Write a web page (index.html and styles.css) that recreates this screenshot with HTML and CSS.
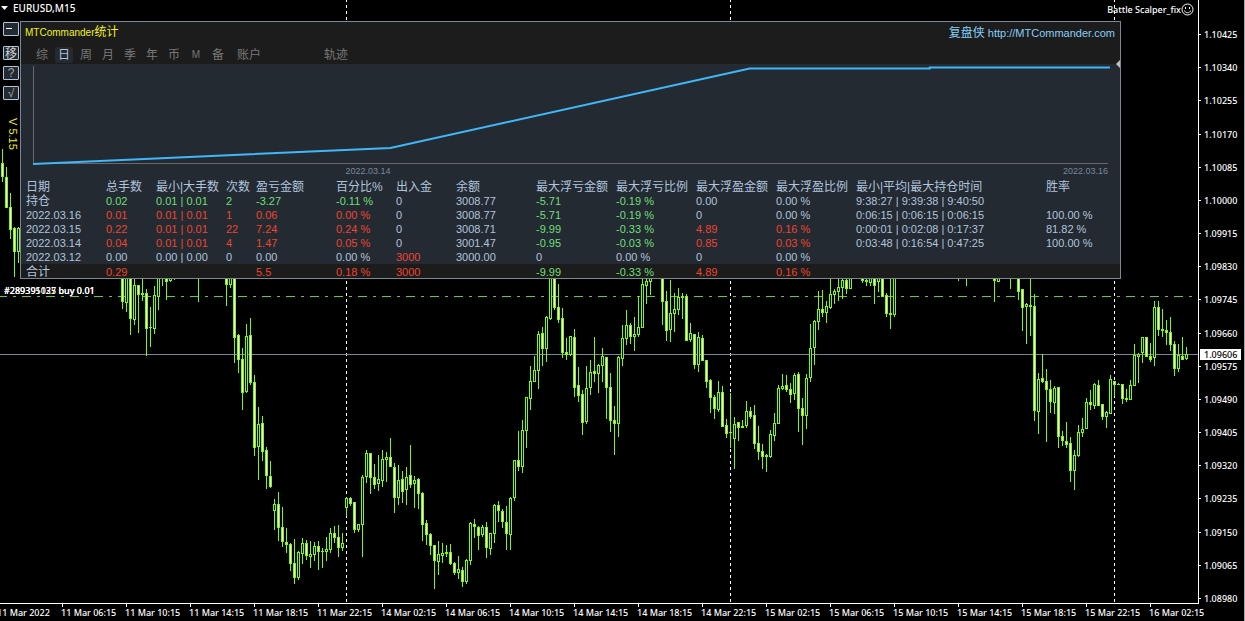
FILE: index.html
```html
<!DOCTYPE html>
<html lang="zh-CN">
<head>
<meta charset="utf-8">
<title>EURUSD,M15</title>
<link rel="stylesheet" href="styles.css">
</head>
<body>
<main class="terminal">
  <section class="chart">
    <svg class="plot" id="plot" viewBox="0 0 1198 603" preserveAspectRatio="none" shape-rendering="crispEdges" aria-label="EURUSD M15 candles">
      <path class="day-line" d="M346.5 -1V603M730.5 -1V603M1114.5 -1V603"/>
      <path class="order-line" d="M-2 296.5H1192"/>
      <path class="bid-line" d="M0 354.5H1198"/>
    </svg>

    <div class="symbol"><svg class="arrow" viewBox="0 0 7 4"><path d="M0 0H7L3.5 4Z"/></svg><span>EURUSD,M15</span></div>
    <div class="expert"><span>Battle Scalper_fix</span><svg class="smiley" viewBox="0 0 13 13"><circle cx="6.5" cy="6.5" r="5.5"/><path d="M3.5 7.5C4 10.5 9 10.5 9.5 7.5M4.5 4V6M8.5 4V6"/></svg></div>

    <div class="side">
      <button class="side-btn first" aria-label="收起"><svg viewBox="0 0 13 12"><path d="M2 5.5H8"/></svg></button>
      <button class="side-btn">移</button>
      <button class="side-btn latin">?</button>
      <button class="side-btn latin">√</button>
      <span class="version">V 5.15</span>
    </div>

    <section class="panel">
      <header class="panel-head">
        <div class="title-row">
          <h1 class="title">MTCommander<span class="han">统计</span></h1>
          <a class="site" href="#"><span class="han">复盘侠</span> http://MTCommander.com</a>
        </div>
        <nav class="tabs">
          <button class="tab">综</button><button class="tab active">日</button><button class="tab">周</button><button class="tab">月</button><button class="tab">季</button><button class="tab">年</button><button class="tab">币</button><button class="tab latin">M</button><button class="tab">备</button><button class="tab wide">账户</button><button class="tab wide track">轨迹</button>
        </nav>
        <svg class="fold" viewBox="0 0 4 8"><path d="M4 0V8L0 4Z"/></svg>
      </header>
      <svg class="equity" viewBox="0 0 1098 102" preserveAspectRatio="none" aria-label="资金曲线">
        <path class="axes" d="M12.5 2V99.5H1086" shape-rendering="crispEdges"/>
        <path class="curve" d="M12 100L369 84L728 4.5H908V3.5H1088"/>
      </svg>
      <div class="dates"><span>2022.03.14</span><span>2022.03.16</span></div>
      <table class="stats">
        <colgroup><col class="w85"><col class="w50"><col class="w70"><col class="w30"><col class="w80"><col class="w60"><col class="w60"><col class="w80"><col class="w80"><col class="w80"><col class="w80"><col class="w80"><col class="w190"><col></colgroup>
        <thead><tr><th>日期</th><th>总手数</th><th>最小|大手数</th><th>次数</th><th>盈亏金额</th><th>百分比%</th><th>出入金</th><th>余额</th><th>最大浮亏金额</th><th>最大浮亏比例</th><th>最大浮盈金额</th><th>最大浮盈比例</th><th>最小|平均|最大持仓时间</th><th>胜率</th></tr></thead>
        <tbody>
          <tr><td class="han">持仓</td><td class="g">0.02</td><td class="g">0.01 | 0.01</td><td class="g">2</td><td class="g">-3.27</td><td class="g">-0.11 %</td><td>0</td><td>3008.77</td><td class="g">-5.71</td><td class="g">-0.19 %</td><td>0.00</td><td>0.00 %</td><td>9:38:27 | 9:39:38 | 9:40:50</td><td></td></tr>
          <tr><td>2022.03.16</td><td class="r">0.01</td><td class="r">0.01 | 0.01</td><td class="r">1</td><td class="r">0.06</td><td class="r">0.00 %</td><td>0</td><td>3008.77</td><td class="g">-5.71</td><td class="g">-0.19 %</td><td>0</td><td>0.00 %</td><td>0:06:15 | 0:06:15 | 0:06:15</td><td>100.00 %</td></tr>
          <tr><td>2022.03.15</td><td class="r">0.22</td><td class="r">0.01 | 0.01</td><td class="r">22</td><td class="r">7.24</td><td class="r">0.24 %</td><td>0</td><td>3008.71</td><td class="g">-9.99</td><td class="g">-0.33 %</td><td class="r">4.89</td><td class="r">0.16 %</td><td>0:00:01 | 0:02:08 | 0:17:37</td><td>81.82 %</td></tr>
          <tr><td>2022.03.14</td><td class="r">0.04</td><td class="r">0.01 | 0.01</td><td class="r">4</td><td class="r">1.47</td><td class="r">0.05 %</td><td>0</td><td>3001.47</td><td class="g">-0.95</td><td class="g">-0.03 %</td><td class="r">0.85</td><td class="r">0.03 %</td><td>0:03:48 | 0:16:54 | 0:47:25</td><td>100.00 %</td></tr>
          <tr><td>2022.03.12</td><td>0.00</td><td>0.00 | 0.00</td><td>0</td><td>0.00</td><td>0.00 %</td><td class="r">3000</td><td>3000.00</td><td>0</td><td>0.00 %</td><td>0</td><td>0.00 %</td><td></td><td></td></tr>
        </tbody>
        <tfoot><tr><td class="han">合计</td><td class="r">0.29</td><td></td><td></td><td class="r">5.5</td><td class="r">0.18 %</td><td class="r">3000</td><td></td><td class="g">-9.99</td><td class="g">-0.33 %</td><td class="r">4.89</td><td class="r">0.16 %</td><td></td><td></td></tr></tfoot>
      </table>
    </section>

    <div class="orders"><span>#289395025 buy 0.01</span><span>#289391137 buy 0.01</span></div>
  </section>

  <aside class="prices">
    <span>1.10425</span><span>1.10340</span><span>1.10255</span><span>1.10170</span><span>1.10085</span><span>1.10000</span><span>1.09915</span><span>1.09830</span><span>1.09745</span><span>1.09660</span><span>1.09575</span><span>1.09490</span><span>1.09405</span><span>1.09320</span><span>1.09235</span><span>1.09150</span><span>1.09065</span><span>1.08980</span>
    <strong class="bid">1.09606</strong>
  </aside>

  <footer class="times">
    <span>11 Mar 2022</span><span>11 Mar 06:15</span><span>11 Mar 10:15</span><span>11 Mar 14:15</span><span>11 Mar 18:15</span><span>11 Mar 22:15</span><span>14 Mar 02:15</span><span>14 Mar 06:15</span><span>14 Mar 10:15</span><span>14 Mar 14:15</span><span>14 Mar 18:15</span><span>14 Mar 22:15</span><span>15 Mar 02:15</span><span>15 Mar 06:15</span><span>15 Mar 10:15</span><span>15 Mar 14:15</span><span>15 Mar 18:15</span><span>15 Mar 22:15</span><span>16 Mar 02:15</span>
  </footer>
</main>
<script src="candles.js"></script>
</body>
</html>
```

FILE: styles.css
```css
* { box-sizing: border-box; }

body {
  margin: 0;
  background: #000;
  color: #fff;
  font-family: "Noto Sans", "Noto Sans CJK SC", sans-serif;
  font-size: 9px;
  font-weight: 500;
  line-height: 12px;
}

button {
  margin: 0;
  padding: 0;
  border: 0;
  background: none;
  color: inherit;
  font: inherit;
}

.terminal {
  display: grid;
  grid-template-columns: minmax(0, 1fr) 47px;
  grid-template-rows: minmax(0, 1fr) 18px;
  height: 100vh;
  overflow: hidden;
}

.chart { position: relative; min-height: 0; }

.plot { display: block; width: 100%; height: 100%; }
.day-line { stroke: #fff; stroke-dasharray: 3 3; fill: none; }
.order-line { stroke: #5fcc32; stroke-dasharray: 9 6 3 6; }
.bid-line { stroke: #778899; }
.candle { fill: #7cfc00; }
.bear { fill: #fff; }
.bull { fill: #000; }

.symbol {
  position: absolute;
  top: 2px;
  left: 1px;
  display: flex;
  align-items: center;
  gap: 5px;
  font-size: 10px;
}
.arrow { width: 7px; height: 4px; fill: #fff; }

.expert {
  position: absolute;
  top: 3px;
  right: 4px;
  display: flex;
  align-items: center;
}
.smiley { width: 13px; height: 13px; fill: none; stroke: #fff; }

/* Tool buttons at the left edge */
.side {
  position: absolute;
  top: 22px;
  left: 3px;
  display: flex;
  flex-direction: column;
  gap: 6px;
}
.side-btn {
  width: 16px;
  height: 14px;
  border: 1px solid #b0c4de;
  border-radius: 1px;
  background: #242a31;
  color: #d0d4d8;
  font-family: "Noto Sans CJK SC", sans-serif;
  font-size: 12px;
  font-weight: normal;
  line-height: 12px;
  text-align: center;
}
.side-btn svg { display: block; width: 13px; height: 12px; stroke: #fff; }
.side-btn.first { margin-bottom: 4px; }
.side-btn.latin { color: #a0a4a8; font-family: "Liberation Sans", sans-serif; }
.version {
  align-self: flex-end;
  margin-top: 12px;
  color: #f0f020;
  font-family: "Liberation Sans", sans-serif;
  font-size: 11px;
  writing-mode: vertical-rl;
}

/* Statistics panel */
.panel {
  position: absolute;
  top: 21px;
  left: 20px;
  right: 77px;
  border: 1px solid #778899;
  background: #242a31;
  color: #b0c4de;
  font-family: "Liberation Sans", "Noto Sans CJK SC", sans-serif;
  font-size: 11px;
  font-weight: normal;
}
.panel .han { font-size: 12px; }
.panel-head { position: relative; background: #1c1c1c; }
.title-row {
  display: flex;
  align-items: center;
  justify-content: space-between;
  height: 21px;
  padding: 0 5px 0 4px;
}
.title { margin: 0; color: #f0f020; font-size: 10px; font-weight: normal; }
.site { color: #87cefa; text-decoration: none; }
.tabs { display: flex; align-items: center; gap: 4px; height: 21px; padding: 3px 0 0 12px; }
.tab {
  width: 18px;
  height: 16px;
  border-radius: 2px;
  color: #787878;
  font-size: 12px;
  line-height: 16px;
}
.tab.latin { font-size: 10px; }
.tab.active { background: #242a31; color: #b0c4de; }
.tab.wide { width: 36px; }
.tab.track { margin-left: 47px; }
.fold { position: absolute; right: 0; bottom: -4px; width: 4px; height: 8px; fill: #c0c0c0; }

.equity { display: block; width: 100%; height: 102px; }
.axes { fill: none; stroke: #696969; }
.curve { fill: none; stroke: #3fb8fb; stroke-width: 2; }

.dates {
  display: grid;
  grid-template-columns: 34% 1fr;
  height: 15px;
  padding-right: 12px;
  color: #778899;
  font-size: 9px;
  line-height: 10px;
  text-align: right;
}

.stats { width: 100%; border-collapse: collapse; table-layout: fixed; }
.stats th, .stats td {
  height: 14px;
  padding: 0;
  font-weight: normal;
  line-height: 14px;
  text-align: left;
  white-space: nowrap;
}
.stats th { height: 13px; font-size: 12px; line-height: 13px; }
.stats th:first-child, .stats td:first-child { padding-left: 5px; }
.stats tfoot { background: #1c1c1c; }
.stats tfoot td { padding-top: 2px; line-height: 12px; }
.stats .g { color: #6fdf78; }
.stats .r { color: #ec4530; }
.w30 { width: 30px; }
.w50 { width: 50px; }
.w60 { width: 60px; }
.w70 { width: 70px; }
.w80 { width: 80px; }
.w85 { width: 85px; }
.w190 { width: 190px; }

.orders { position: absolute; top: 285px; left: 4px; display: grid; }
.orders span { grid-area: 1 / 1; }

/* Price scale */
.prices {
  position: relative;
  grid-row: 1 / 3;
  grid-column: 2;
  display: flex;
  flex-direction: column;
  justify-content: space-between;
  padding: 29px 0 16px 6px;
  border-right: 1px solid #a8a8a8;
}
.prices::after {
  content: "";
  position: absolute;
  top: 0;
  bottom: 17px;
  left: 0;
  border-left: 1px solid #fff;
}
.prices span { position: relative; }
.prices span::before {
  content: "";
  position: absolute;
  top: 5px;
  left: -5px;
  width: 2px;
  border-top: 1px solid #fff;
}
.bid {
  position: absolute;
  top: 349px;
  left: 2px;
  right: 3px;
  padding-left: 4px;
  background: #fff;
  color: #000;
  font-weight: 500;
  line-height: 11px;
}

/* Time scale */
.times {
  display: grid;
  grid-template-columns: repeat(18, minmax(0, 64fr)) minmax(0, 48fr);
  margin-left: -2px;
  border-top: 1px solid #fff;
  text-indent: -1px;
  white-space: nowrap;
}
.times span { position: relative; padding-top: 3px; }
.times span::before {
  content: "";
  position: absolute;
  top: 0;
  left: 0;
  height: 3px;
  border-left: 1px solid #fff;
}
```

FILE: candles.js
```javascript
// x, high, body top, body bottom, low, 1 = falling
const candles = `
2 149 163 177 182 1;6 167 177 208 208 1;10 193 207 230 239 1;14 227 228 252 277 1;18 227 228 252 263 0;
122 270 270 302 309 1;126 270 270 303 312 0;130 270 270 319 335 1;134 270 285 320 325 0;138 285 285 295 333 1;
142 270 293 295 301 1;146 289 293 329 356 1;150 307 327 328 347 0;154 286 295 329 334 0;158 270 270 297 310 0;
162 270 270 270 286 0;166 270 270 282 300 1;170 270 270 281 282 0;174 270 270 270 280 0;198 270 270 270 302 0;
226 270 270 285 306 1;230 270 270 285 288 0;234 270 270 338 363 1;238 334 335 360 373 1;242 348 359 393 410 1;
246 324 336 392 393 0;250 318 335 383 385 1;254 375 382 448 456 1;258 407 424 447 480 0;262 416 423 452 461 1;
266 447 450 476 489 1;270 461 476 487 488 1;274 499 504 511 530 0;278 492 504 528 541 1;282 507 527 542 547 1;
286 528 542 545 553 1;290 543 544 564 571 1;294 539 563 578 584 1;298 551 552 578 580 0;302 538 543 554 564 0;
306 540 543 556 560 1;310 541 554 557 568 0;314 542 546 555 561 0;318 541 546 552 570 1;322 548 551 552 568 0;
326 537 549 552 561 0;330 528 533 550 553 0;334 526 533 538 543 1;338 525 537 548 557 1;342 533 543 548 551 0;
346 497 498 508 516 0;350 497 498 504 506 1;354 502 502 530 533 1;358 524 524 530 532 0;362 475 477 525 557 0;
366 450 453 477 483 0;370 453 453 478 494 1;374 464 477 485 489 1;378 455 479 484 491 0;382 450 459 481 487 0;
386 452 457 460 482 0;390 438 457 467 467 1;394 463 467 498 513 1;398 465 480 498 505 0;402 471 479 492 503 1;
406 467 477 490 505 0;410 445 475 485 488 1;414 476 480 484 508 0;418 478 479 494 509 1;422 492 493 525 541 1;
426 520 523 535 545 1;430 533 534 546 555 1;434 545 545 561 589 1;438 541 554 562 575 0;442 543 553 556 563 0;
446 545 552 554 557 0;450 544 552 564 565 1;454 562 563 573 575 1;458 556 569 573 579 0;462 567 570 582 587 1;
466 559 560 582 584 0;470 522 523 561 565 0;474 519 524 527 538 1;478 526 527 536 550 1;482 525 527 535 537 0;
486 522 527 548 558 1;490 533 533 549 555 0;494 504 505 534 543 0;498 501 505 511 522 1;502 509 511 522 528 1;
506 506 522 534 550 1;510 497 498 535 550 0;514 460 460 498 501 0;518 431 460 467 471 1;522 420 430 467 473 0;
526 397 397 431 448 0;530 366 381 399 410 0;534 356 370 382 382 0;538 331 334 371 389 0;542 327 333 349 366 1;
546 316 317 349 362 0;550 270 270 319 320 0;554 270 270 308 310 1;558 284 307 320 323 1;562 308 318 353 358 1;
566 338 352 355 360 1;570 336 336 355 356 0;574 329 337 388 397 1;578 367 385 396 402 1;582 390 394 423 435 1;
586 366 388 422 424 0;590 360 372 388 395 0;594 337 371 374 382 1;598 364 365 374 393 0;602 348 356 366 382 0;
606 357 357 388 419 1;610 373 387 421 432 1;614 406 420 424 455 1;618 356 357 424 437 0;622 325 338 359 366 0;
626 310 325 339 345 0;630 323 325 337 344 1;634 317 334 337 351 0;638 296 327 335 337 0;642 270 284 328 328 0;
646 270 281 286 304 0;650 270 270 282 295 0;662 270 270 302 325 1;666 291 301 331 341 1;670 280 313 330 342 0;
674 293 309 314 332 0;678 288 297 310 315 0;682 293 296 298 319 0;686 294 296 341 341 1;690 323 333 340 342 0;
694 334 334 365 369 1;698 332 337 365 372 0;702 335 338 361 361 1;706 360 360 382 388 1;710 379 380 398 413 1;
714 395 397 409 419 1;718 381 392 410 412 0;722 386 392 427 427 1;726 419 425 434 438 1;730 393 432 433 448 0;
734 417 424 439 469 0;738 422 422 428 441 1;742 420 426 428 428 1;746 401 411 426 428 0;750 407 411 417 419 1;
754 405 415 444 449 1;758 426 443 452 460 1;762 444 451 457 469 1;766 454 455 457 472 0;770 430 434 457 458 0;
774 413 423 436 441 0;778 385 388 424 424 0;782 374 386 389 390 0;786 375 385 390 392 1;790 383 389 395 403 1;
794 373 375 394 400 0;798 372 374 409 432 1;802 398 408 416 445 1;806 374 378 416 429 0;810 324 348 378 382 0;
814 320 321 348 365 0;818 291 309 322 330 0;822 290 309 313 317 1;826 301 306 313 323 0;830 270 294 308 309 0;
834 289 291 295 304 0;838 270 287 292 301 0;842 270 280 288 299 0;846 270 280 289 294 1;850 270 270 289 289 0;
862 270 270 281 283 1;866 270 280 282 286 1;870 270 270 283 286 0;874 270 270 286 304 1;878 270 270 282 292 0;
882 270 270 297 297 1;886 293 295 314 317 1;890 270 313 315 329 0;894 270 270 315 317 0;958 270 270 270 281 0;
966 270 270 270 286 0;994 270 270 281 302 1;998 270 270 282 282 0;1010 270 270 270 289 0;1018 270 270 292 300 1;
1022 289 289 308 331 1;1026 303 304 307 344 0;1030 270 305 307 336 0;1034 294 306 411 421 1;1038 373 379 412 434 0;
1042 354 378 382 383 1;1046 369 381 390 442 1;1050 380 389 402 413 1;1054 386 388 403 414 0;1058 387 387 437 448 1;
1062 431 436 441 446 1;1066 422 441 445 448 1;1070 437 443 471 482 1;1074 450 455 471 490 0;1078 425 432 456 457 0;
1082 418 429 433 437 0;1086 398 402 429 429 0;1090 390 402 405 410 1;1094 383 384 406 409 0;1098 380 385 406 406 1;
1102 404 404 417 420 1;1106 411 412 417 428 0;1110 375 379 414 414 0;1114 381 381 385 396 1;1118 383 384 385 385 0;
1122 384 384 399 404 1;1126 389 398 400 402 0;1130 380 385 400 400 0;1134 344 355 386 386 0;1138 353 354 357 383 0;
1142 337 337 353 363 0;1146 337 337 357 357 1;1150 343 356 360 362 1;1154 301 307 358 366 0;1158 301 307 330 336 1;
1162 309 329 331 337 0;1166 320 330 333 345 1;1170 317 332 345 351 1;1174 341 344 369 376 1;1178 344 355 369 372 0;
1182 337 356 360 360 1;1186 347 354 359 360 0`;

const plot = document.getElementById("plot");

function addRect(x, y, width, height, className) {
  if (height <= 0) return;
  const rect = document.createElementNS("http://www.w3.org/2000/svg", "rect");
  rect.setAttribute("x", x);
  rect.setAttribute("y", y);
  rect.setAttribute("width", width);
  rect.setAttribute("height", height);
  rect.setAttribute("class", className);
  plot.appendChild(rect);
}

for (const entry of candles.split(";")) {
  const [x, high, top, bottom, low, falling] = entry.trim().split(" ").map(Number);
  addRect(x, high, 1, low - high, "candle");
  addRect(x - 1, top, 3, bottom - top, "candle");
  addRect(x, top + 1, 1, bottom - top - 2, falling ? "bear" : "bull");
}
```
